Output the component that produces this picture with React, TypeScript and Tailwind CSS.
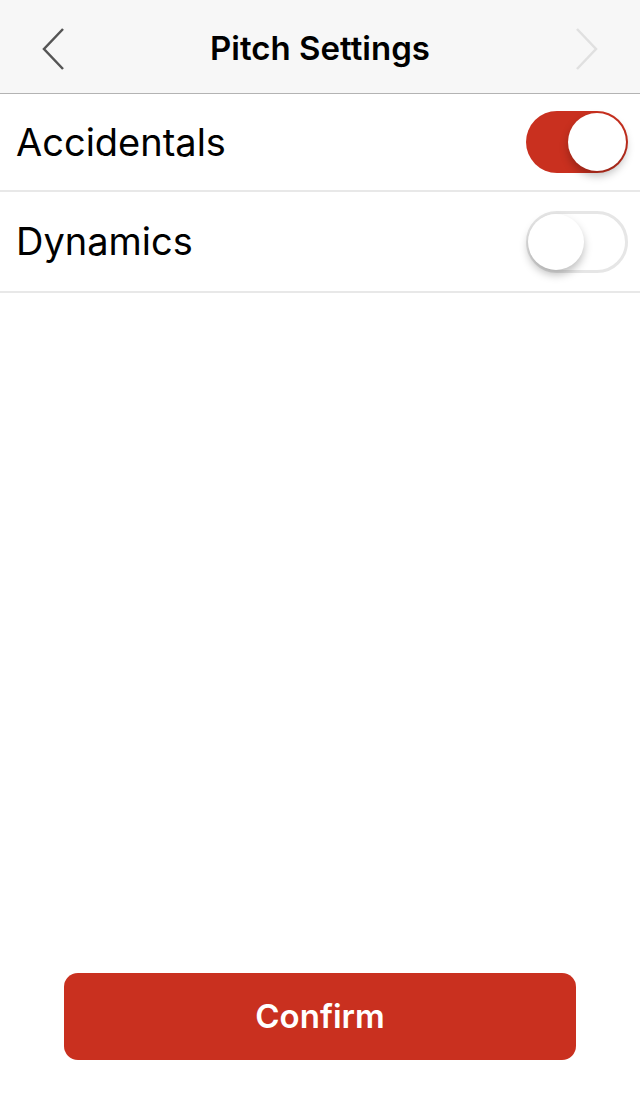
import { useState } from 'react';

function Toggle({ on, onChange }: { on: boolean; onChange: () => void }) {
  return (
    <button
      onClick={onChange}
      className={`relative flex h-[62px] w-[102px] items-center rounded-full p-[2px] ${
        on ? 'bg-[#c9301f] justify-end' : 'bg-white justify-start border-[3px] border-[#e6e6e6]'
      }`}
    >
      <span
        className={`block rounded-full bg-white shadow-[0_5px_8px_rgba(0,0,0,0.25)] ${
          on ? 'h-[58px] w-[58px]' : 'h-[56px] w-[56px] -ml-[3px]'
        }`}
      />
    </button>
  );
}

export default function App() {
  const [accidentals, setAccidentals] = useState(true);
  const [dynamics, setDynamics] = useState(false);

  return (
    <div className="flex h-[1096px] w-[640px] flex-col bg-white font-['Roboto',sans-serif]">
      <header className="flex h-[94px] items-center justify-between border-b border-[#b3b3b3] bg-[#f7f7f7] px-[42px] pt-[4px]">
        <svg width="23" height="42" viewBox="0 0 23 42" fill="none">
          <path d="M21 1 L2 21 L21 41" stroke="#555" strokeWidth="2.5" />
        </svg>
        <h1 className="font-['Inter',sans-serif] text-[33px] font-semibold text-black">Pitch Settings</h1>
        <svg width="23" height="42" viewBox="0 0 23 42" fill="none">
          <path d="M2 1 L21 21 L2 41" stroke="#e0e0e0" strokeWidth="2.5" />
        </svg>
      </header>

      <div className="flex h-[98px] items-center justify-between border-b-2 border-[#e8e8e8] pl-[16px] pr-[12px]">
        <span className="font-['Inter',sans-serif] text-[38px] text-black">Accidentals</span>
        <Toggle on={accidentals} onChange={() => setAccidentals(!accidentals)} />
      </div>
      <div className="flex h-[101px] items-center justify-between border-b-2 border-[#e8e8e8] pl-[16px] pr-[12px]">
        <span className="font-['Inter',sans-serif] text-[38px] text-black">Dynamics</span>
        <Toggle on={dynamics} onChange={() => setDynamics(!dynamics)} />
      </div>

      <div className="flex-1" />

      <div className="px-[64px] pb-[36px]">
        <button className="flex h-[87px] w-full items-center justify-center rounded-[14px] bg-[#c9301f] text-[33px] font-semibold text-white font-['Inter',sans-serif]">
          Confirm
        </button>
      </div>
    </div>
  );
}
